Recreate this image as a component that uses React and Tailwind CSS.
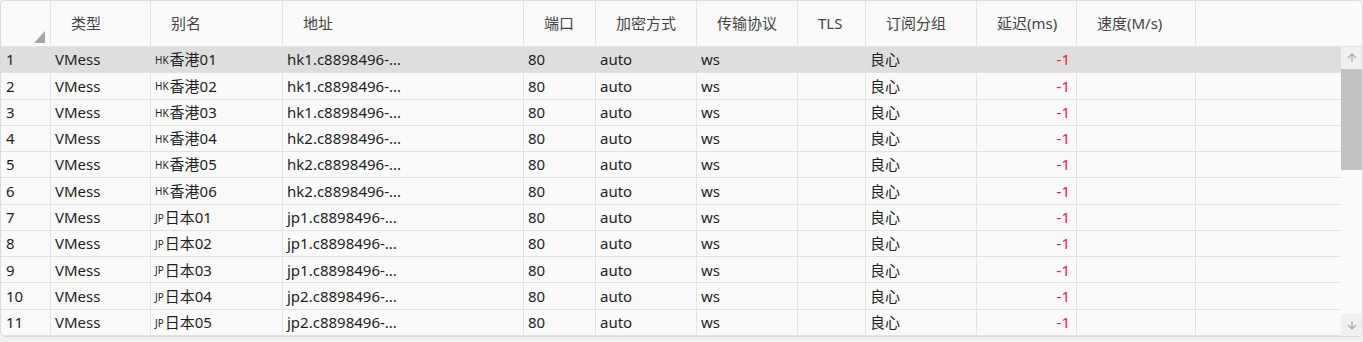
import React from "react";

const columns = [
  { key: "type", title: "类型", w: "w-[100px]" },
  { key: "alias", title: "别名", w: "w-[132px]" },
  { key: "addr", title: "地址", w: "w-[241px]" },
  { key: "port", title: "端口", w: "w-[72px]" },
  { key: "enc", title: "加密方式", w: "w-[101px]" },
  { key: "net", title: "传输协议", w: "w-[101px]" },
  { key: "tls", title: "TLS", w: "w-[68px]" },
  { key: "group", title: "订阅分组", w: "w-[111px]" },
  { key: "delay", title: "延迟(ms)", w: "w-[100px]" },
  { key: "speed", title: "速度(M/s)", w: "w-[119px]" },
];

const servers = [
  ["HK", "香港01", "hk1"],
  ["HK", "香港02", "hk1"],
  ["HK", "香港03", "hk1"],
  ["HK", "香港04", "hk2"],
  ["HK", "香港05", "hk2"],
  ["HK", "香港06", "hk2"],
  ["JP", "日本01", "jp1"],
  ["JP", "日本02", "jp1"],
  ["JP", "日本03", "jp1"],
  ["JP", "日本04", "jp2"],
  ["JP", "日本05", "jp2"],
];

const font = { fontFamily: '"Noto Sans", "Noto Sans CJK SC", sans-serif' };

function Cell({ w, children, className = "" }) {
  return (
    <div className={`${w} shrink-0 h-full border-r border-[#e2e2e2] flex items-center px-[4px] overflow-hidden whitespace-nowrap ${className}`}>
      {children}
    </div>
  );
}

export default function App() {
  return (
    <div className="w-[1363px] h-[342px] bg-[#efefef] overflow-hidden" style={font}>
      <div className="h-[337px] bg-[#fafafa] border border-[#dcdcdc] rounded-[5px] flex flex-col overflow-hidden">
        {/* Header */}
        <div className="h-[46px] shrink-0 flex border-b border-[#e6e6e6] text-[15px] text-[#444]">
          <div className="w-[50px] shrink-0 h-full border-r border-[#e2e2e2] relative">
            <svg className="absolute right-[5px] bottom-[3px]" width="11" height="12" viewBox="0 0 11 12">
              <polygon points="11,0 11,12 0,12" fill="#a3a3a3" />
            </svg>
          </div>
          {columns.map((c) => (
            <div key={c.key} className={`${c.w} shrink-0 h-full border-r border-[#e2e2e2] flex items-center pl-[20px]`}>
              {c.title}
            </div>
          ))}
          <div className="flex-1" />
        </div>

        {/* Body */}
        <div className="flex-1 flex min-h-0">
          <div className="flex-1 flex flex-col text-[15px] text-[#1e1e1e]">
            {servers.map(([cc, name, host], i) => (
              <div
                key={i}
                className={`h-[26.27px] flex border-b border-[#e2e2e2] ${i === 0 ? "bg-[#dedede]" : ""}`}
              >
                <Cell w="w-[50px]" className="pl-[5px]">{i + 1}</Cell>
                <Cell w="w-[100px]">VMess</Cell>
                <Cell w="w-[132px]">
                  <span className="text-[10px] mr-[1px] mt-[2px]">{cc}</span>
                  {name}
                </Cell>
                <Cell w="w-[241px]">{host}.c8898496-...</Cell>
                <Cell w="w-[72px]">80</Cell>
                <Cell w="w-[101px]">auto</Cell>
                <Cell w="w-[101px]">ws</Cell>
                <Cell w="w-[68px]" />
                <Cell w="w-[111px]">良心</Cell>
                <Cell w="w-[100px]" className="justify-end pr-[6px] text-[#f0163c]">-1</Cell>
                <Cell w="w-[119px]" />
                <div className="flex-1" />
              </div>
            ))}
          </div>

          {/* Scrollbar */}
          <div className="w-[21px] shrink-0 flex flex-col bg-[#fafafa]">
            <div className="h-[22px] bg-[#f0f0f0] flex items-center justify-center">
              <svg width="10" height="10" viewBox="0 0 10 10" fill="none" stroke="#a8a8a8" strokeWidth="1.2">
                <path d="M5 9V1M1 5l4-4 4 4" />
              </svg>
            </div>
            <div className="h-[101px] bg-[#c2c2c2]" />
            <div className="flex-1" />
            <div className="h-[22px] bg-[#f0f0f0] flex items-center justify-center">
              <svg width="10" height="10" viewBox="0 0 10 10" fill="none" stroke="#a8a8a8" strokeWidth="1.2">
                <path d="M5 1v8M1 5l4 4 4-4" />
              </svg>
            </div>
          </div>
        </div>
      </div>
    </div>
  );
}
